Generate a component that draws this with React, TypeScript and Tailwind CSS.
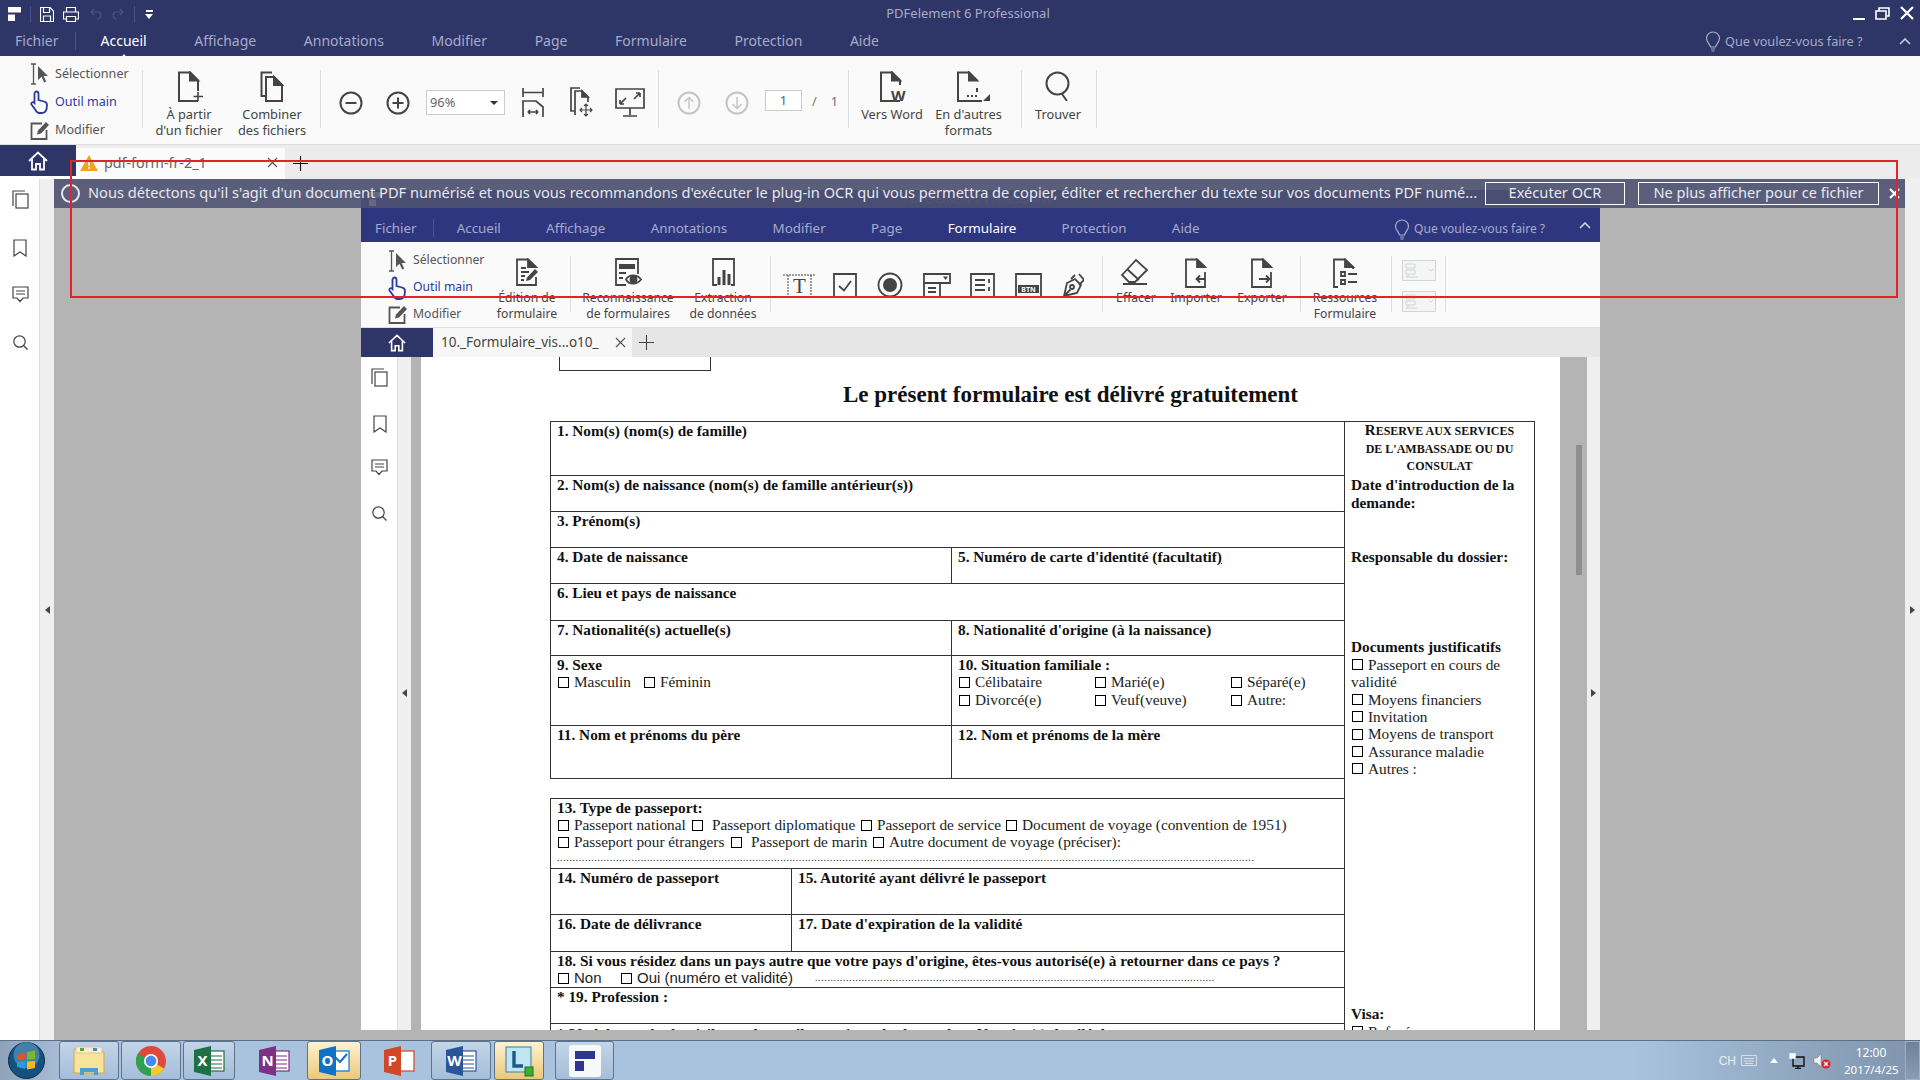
import type { ReactNode } from "react";

function Ic({ w, h, children, className, sw = 1.6 }: { w: number; h: number; children: ReactNode; className?: string; sw?: number }) {
  return (
    <svg width={w} height={h} viewBox={`0 0 ${w} ${h}`} fill="none" stroke="currentColor" strokeWidth={sw} className={className}>
      {children}
    </svg>
  );
}

function Doc({ extra, tail = "M21 17V30H2V1.5H13L21 9.5" }: { extra?: ReactNode; tail?: string }) {
  return (
    <Ic w={30} h={31} sw={2}>
      <path d={tail} />
      <path d="M13 1.5V9.5H21Z" fill="currentColor" />
      {extra}
    </Ic>
  );
}

const SelectIcon = () => (
  <Ic w={19} h={22} sw={1.3}>
    <path d="M1 1H6M3.5 1V21M1 21H6" />
    <path d="M8 3V17L11.5 13.8 14.2 19.5 16.2 18.5 13.6 13H18Z" fill="currentColor" stroke="none" />
  </Ic>
);

const HandIcon = () => (
  <Ic w={18} h={24} sw={1.8}>
    <path d="M6.5 1.5C8 1.5 8.5 2.5 8.5 4V10L14 11.5C16 12 17 13 17 15 17 19 16 23 12 23H9.5C7.5 23 6.5 22 5.5 20L1.5 14.5C.8 13 2.3 11.5 4 12.5L4.5 13V4C4.5 2.7 5.3 1.5 6.5 1.5Z" />
  </Ic>
);

const EditIcon = () => (
  <Ic w={20} h={19} sw={1.8}>
    <path d="M12 2.5H1.5V18H16.5V9" />
    <path d="M7 13.5L8 9.5 16 1 19 4 11 12.5Z" fill="currentColor" stroke="none" />
  </Ic>
);

const ZoomCircle = ({ plus, down, up, color }: { plus?: boolean; down?: boolean; up?: boolean; color: string }) => (
  <Ic w={24} h={24} sw={2} className={color}>
    <circle cx={12} cy={12} r={10.5} />
    {up && <path d="M12 18V6.5M7.5 11L12 6.5 16.5 11" strokeWidth={1.4} />}
    {down && <path d="M12 6V17.5M7.5 13L12 17.5 16.5 13" strokeWidth={1.4} />}
    {!up && !down && <path d="M6.5 12H17.5" />}
    {plus && <path d="M12 6.5V17.5" />}
  </Ic>
);

function Tools({ className, row }: { className: string; row: string }) {
  return (
    <div className={className}>
      <div className={`flex items-center text-[#555] ${row}`}>
        <span className="w-[25px] shrink-0"><SelectIcon /></span>
        <span className="whitespace-nowrap">Sélectionner</span>
      </div>
      <div className={`flex items-center text-[#2c3aa0] ${row}`}>
        <span className="w-[25px] shrink-0"><HandIcon /></span>
        <span className="whitespace-nowrap">Outil main</span>
      </div>
      <div className={`flex items-center text-[#555] ${row}`}>
        <span className="w-[25px] shrink-0"><EditIcon /></span>
        <span className="whitespace-nowrap">Modifier</span>
      </div>
    </div>
  );
}

function Btn({ icon, label, label2, className, iconClass }: { icon: ReactNode; label: string; label2?: string; className: string; iconClass: string }) {
  return (
    <div className={`flex flex-col items-center leading-[16px] text-[#444] ${className}`}>
      <div className={iconClass}>{icon}</div>
      <span className="whitespace-nowrap">{label}</span>
      {label2 && <span className="whitespace-nowrap">{label2}</span>}
    </div>
  );
}

function Logo() {
  return (
    <Ic w={14} h={14}>
      <path d="M0 0H13V5.5H0ZM0 7.5H7V14H0Z" fill="#fff" stroke="none" />
    </Ic>
  );
}

function MenuBar({ items, active, className }: { items: string[]; active: string; className: string }) {
  return (
    <div className={`flex items-center text-[#a7abc9] ${className}`}>
      {items.map((m) => (
        <span key={m} className={m === active ? "relative text-white" : ""}>
          {m}
          {m === active && <span className="absolute left-1/2 top-[24px] -ml-[5px] border-x-[5px] border-b-[6px] border-x-transparent border-b-[#fafafa]" />}
        </span>
      ))}
    </div>
  );
}

const MENU = ["Accueil", "Affichage", "Annotations", "Modifier", "Page", "Formulaire", "Protection", "Aide"];

function Ask({ className }: { className: string }) {
  return (
    <div className={`flex items-center text-[#a7abc9] ${className}`}>
      <Ic w={16} h={21} sw={1.2} className="mr-[4px]">
        <path d="M8 1A6.5 6.5 0 0 0 1.5 7.5C1.5 11 5 13 5.5 16H10.5C11 13 14.5 11 14.5 7.5A6.5 6.5 0 0 0 8 1ZM6 18H10M6.5 20H9.5" />
      </Ic>
      <span className="whitespace-nowrap">Que voulez-vous faire ?</span>
    </div>
  );
}

const Chevron = ({ className }: { className: string }) => (
  <Ic w={12} h={7} className={className}><path d="M1 6L6 1 11 6" /></Ic>
);

const Sep = ({ className }: { className: string }) => <div className={`w-px shrink-0 bg-[#dedede] ${className}`} />;

function Home({ size }: { size: number }) {
  return (
    <svg width={size} height={size} viewBox="0 0 20 20" fill="none" stroke="#fff" strokeWidth={1.8}>
      <path d="M1 10L10 1.5 19 10M4 8V18.5H8V13H12V18.5H16V8" />
    </svg>
  );
}

function SideIcons({ gaps }: { gaps: string[] }) {
  return (
    <div className="flex flex-col items-center text-[#444]">
      <Ic w={17} h={19} sw={1.2}><path d="M1 16V1H13" /><rect x={4} y={4} width={12} height={14} /></Ic>
      <Ic w={14} h={18} sw={1.2} className={gaps[0]}><path d="M1 1H13V17L7 13 1 17Z" /></Ic>
      <Ic w={17} h={17} sw={1.2} className={gaps[1]}><path d="M1 1H16V12H11L8 15.5 5 12H1ZM4 5H13M4 8H13" /></Ic>
      <Ic w={15} h={15} sw={1.2} className={gaps[2]}><circle cx={6.5} cy={6.5} r={5.7} /><path d="M10.5 10.5L14.5 14.5" /></Ic>
    </div>
  );
}

const Arrow = ({ className, left }: { className?: string; left?: boolean }) => (
  <div className={`${left ? "border-r-[5px] border-r-[#444]" : "border-l-[5px] border-l-[#444]"} border-y-[4px] border-y-transparent ${className ?? ""}`} />
);

function OuterRibbon() {
  return (
    <div className="flex h-[89px] items-start bg-[#fafafa] border-b border-[#ddd] text-[12.8px]">
      <Tools className="w-[142px] shrink-0 pl-[30px] pt-[4px] text-[12.6px]" row="h-[28px]" />
      <Sep className="h-[58px] mt-[14px]" />
      <Btn className="ml-[3px] w-[86px] pt-[15px]" iconClass="h-[35px] pl-[6px]" icon={<Doc tail="M21 30H2V1.5H13L21 9.5V20" extra={<path d="M21 21V30M16.5 25.5H26" strokeWidth={1.6} />} />} label="À partir" label2="d'un fichier" />
      <Btn className="w-[80px] pt-[15px]" iconClass="h-[35px]" icon={
        <Ic w={24} h={31} sw={2}>
          <path d="M6 25H1.5V1.5H12" />
          <path d="M6 6H14L22 14V30H6Z" />
          <path d="M14 6V14H22Z" fill="currentColor" />
        </Ic>} label="Combiner" label2="des fichiers" />
      <Sep className="ml-[8px] h-[58px] mt-[14px]" />
      <div className="ml-[18px] mt-[35px] text-[#444]"><ZoomCircle color="" /></div>
      <div className="ml-[23px] mt-[35px] text-[#444]"><ZoomCircle plus color="" /></div>
      <div className="ml-[16px] mt-[34px] flex h-[25px] w-[79px] items-center justify-between border border-[#ccc] bg-white px-[3px] text-[#666]">
        96%
        <span className="mr-[3px] border-x-[4px] border-t-[4px] border-x-transparent border-t-[#333]" />
      </div>
      <div className="ml-[17px] mt-[31px] text-[#444]">
        <Ic w={22} h={30} sw={1.7}><path d="M1 10V1M21 10V1M1 5.5H21M1 30V14H14L21 20V30M6 25H16M6 25L8 23M6 25L8 27M16 25L14 23M16 25L14 27" /></Ic>
      </div>
      <div className="ml-[26px] mt-[31px] text-[#444]">
        <Ic w={23} h={30} sw={1.7}>
          <path d="M5 24H1V1H10M5 24V4H12L18 10V15M5 28V24" />
          <path d="M12 4V10H18Z" fill="currentColor" />
          <path d="M16 17V29M10 23H22M14 19L16 17 18 19M14 27L16 29 18 27M12 21L10 23 12 25M20 21L22 23 20 25" strokeWidth={1.2} />
        </Ic>
      </div>
      <div className="ml-[22px] mt-[32px] text-[#444]">
        <Ic w={30} h={29} sw={1.7}><path d="M1 1H29V20H1ZM15 20V27M8 28H22M5 16L11 10M5 16V12M5 16H9M25 5L19 11M25 5V9M25 5H21" /></Ic>
      </div>
      <Sep className="ml-[13px] h-[58px] mt-[14px]" />
      <div className="ml-[18px] mt-[35px]"><ZoomCircle up color="text-[#c4c4c4]" /></div>
      <div className="ml-[24px] mt-[35px]"><ZoomCircle down color="text-[#c4c4c4]" /></div>
      <div className="ml-[16px] mt-[34px] flex h-[21px] w-[37px] items-center justify-center border border-[#ccc] bg-white text-[#666]">1</div>
      <div className="mt-[36px] flex w-[46px] text-[#777]">
        <span className="ml-[10px]">/</span>
        <span className="ml-[14px]">1</span>
      </div>
      <Sep className="h-[58px] mt-[14px]" />
      <Btn className="ml-[5px] w-[76px] pt-[15px]" iconClass="h-[35px] pl-[4px] relative" icon={
        <Doc tail="M21 30H2V1.5H13L21 9.5V14" extra={<text x={12} y={30} fontSize={15} fontWeight={700} fill="currentColor" stroke="none" fontFamily="Noto Sans">W</text>} />} label="Vers Word" />
      <Btn className="w-[77px] pt-[15px]" iconClass="h-[35px] pl-[8px]" icon={
        <div className="flex items-end">
          <Doc extra={<path d="M11 25H13M15 25H17M19 25H21" strokeWidth={2} />} tail="M21 17V21M26 30H2V1.5H13L21 9.5" />
          <span className="-ml-[3px] mb-[1px] border-b-[7px] border-l-[7px] border-b-[#444] border-l-transparent" />
        </div>} label="En d'autres" label2="formats" />
      <Sep className="ml-[14px] h-[58px] mt-[14px]" />
      <Btn className="ml-[2px] w-[68px] pt-[15px]" iconClass="h-[35px]" icon={
        <Ic w={26} h={30} sw={2}><circle cx={12.5} cy={12.5} r={11} /><path d="M17 23L22 30" /></Ic>} label="Trouver" />
      <Sep className="ml-[4px] h-[58px] mt-[14px]" />
    </div>
  );
}

function FormIcon({ className, children, w }: { className: string; children: ReactNode; w: number }) {
  return <div className={`mt-[30px] text-[#444] ${className}`}><Ic w={w} h={26} sw={1.8}>{children}</Ic></div>;
}

const DisabledIcon = () => (
  <Ic w={34} h={21} sw={1} className="bg-[#f5f5f5] text-[#cfd6d8]">
    <path d="M.5.5H33.5V20.5H.5ZM4 4H13V8H4ZM4 10H13V14H4ZM4 17H16M4 17L7 15M27 9L29 11 31 9" />
  </Ic>
);

function InnerRibbon() {
  return (
    <div className="flex h-[86px] items-start bg-[#fafafa] border-b border-[#ddd] text-[12.2px]">
      <Tools className="w-[123px] shrink-0 pl-[27px] pt-[5px]" row="h-[27px]" />
      <Btn className="w-[86px] pt-[16px]" iconClass="h-[32px]" icon={
        <Ic w={24} h={28} sw={1.8}>
          <path d="M21 19V27H2V1.5H13L21 9" />
          <path d="M13 1.5V9H21Z" fill="currentColor" />
          <path d="M6 10H11M6 14H14M6 18H10M6 22H9" />
          <path d="M11 23L12 19.5 20 11 23 14 15 22Z" fill="currentColor" stroke="none" />
        </Ic>} label="Édition de" label2="formulaire" />
      <Sep className="h-[56px] mt-[14px]" />
      <Btn className="ml-[2px] w-[110px] pt-[16px]" iconClass="h-[32px]" icon={
        <Ic w={28} h={28} sw={1.8}>
          <path d="M12 27H2V1H24V16" />
          <path d="M5 6H21V11H5Z" fill="currentColor" stroke="none" />
          <path d="M5 15H12M5 20H9" />
          <path d="M12 21.5C15 16 23 16 27 21.5 23 27 15 27 12 21.5Z" />
          <circle cx={19.5} cy={21.5} r={3} fill="currentColor" />
        </Ic>} label="Reconnaissance" label2="de formulaires" />
      <Btn className="w-[80px] pt-[16px]" iconClass="h-[32px]" icon={
        <Ic w={25} h={28} sw={1.8}>
          <path d="M6 27H2V1H23V27H20" />
          <path d="M8 27V19M13 27V12M18 27V16" strokeWidth={3} />
        </Ic>} label="Extraction" label2="de données" />
      <Sep className="ml-[7px] h-[56px] mt-[14px]" />
      <FormIcon w={35} className="ml-[11px]">
        <path d="M1 3H34M1 25H34M6 3V25M29 3V25" strokeWidth={1} strokeDasharray="2 1" />
        <text x={17.5} y={21} textAnchor="middle" fontSize={21} fill="currentColor" stroke="none" fontFamily="Liberation Serif">T</text>
      </FormIcon>
      <FormIcon w={24} className="ml-[16px]">
        <path d="M1 2H23V25H1ZM6 14L11 18.5 18 9" />
      </FormIcon>
      <FormIcon w={26} className="ml-[20px]">
        <circle cx={13} cy={13} r={11.5} />
        <circle cx={13} cy={13} r={7} fill="currentColor" stroke="none" />
      </FormIcon>
      <FormIcon w={28} className="ml-[20px]">
        <path d="M1 2H27V11H17V25H1ZM1 11H17M5 16H13M5 20H13" />
        <path d="M20 4.5H25L22.5 8Z" fill="currentColor" stroke="none" />
      </FormIcon>
      <FormIcon w={25} className="ml-[19px]">
        <path d="M1 2H24V25H1ZM5 8H15M5 13H15M5 18H15M19 7V11M19 15V19" />
      </FormIcon>
      <FormIcon w={27} className="ml-[20px]">
        <path d="M1 2H26V25H1Z" />
        <path d="M3 13H24V21H3Z" fill="currentColor" stroke="none" />
        <text x={13.5} y={20} textAnchor="middle" fontSize={7} fontWeight={700} fill="#fafafa" stroke="none" fontFamily="Noto Sans">BTN</text>
      </FormIcon>
      <FormIcon w={22} className="ml-[20px]">
        <path d="M2 24L5 11 13 7 19 13 15 21ZM2 24L8.5 17.5M13 3L9 7M17 2L22 8 17 13" />
        <circle cx={10} cy={15} r={2} />
      </FormIcon>
      <Sep className="ml-[18px] h-[56px] mt-[14px]" />
      <Btn className="ml-[3px] w-[60px] pt-[16px]" iconClass="h-[32px]" icon={
        <Ic w={32} h={28} sw={1.8}>
          <path d="M2 17L16 2 27 12 15 24H9ZM7 11L19 22M3 26H27" />
        </Ic>} label="Effacer" />
      <Btn className="w-[60px] pt-[16px]" iconClass="h-[32px]" icon={
        <Ic w={24} h={30} sw={1.8}>
          <path d="M21 14V29H2V1.5H13L21 9" />
          <path d="M13 1.5V9H21Z" fill="currentColor" />
          <path d="M21 21H13M16 17.5L12.5 21 16 24.5" />
        </Ic>} label="Importer" />
      <Btn className="ml-[4px] w-[64px] pt-[16px]" iconClass="h-[32px]" icon={
        <Ic w={24} h={30} sw={1.8}>
          <path d="M21 14V29H2V1.5H13L21 9" />
          <path d="M13 1.5V9H21Z" fill="currentColor" />
          <path d="M9 21H19M16 17.5L19.5 21 16 24.5" />
        </Ic>} label="Exporter" />
      <Sep className="ml-[6px] h-[56px] mt-[14px]" />
      <Btn className="ml-[1px] w-[86px] pt-[16px]" iconClass="h-[32px]" icon={
        <Ic w={26} h={30} sw={1.8}>
          <path d="M6 29H2V1.5H13L21 9V11" />
          <path d="M13 1.5V9H21Z" fill="currentColor" />
          <path d="M9 14H13V18H9ZM9 22H13V26H9ZM16 16H25M16 24H25" />
        </Ic>} label="Ressources" label2="Formulaire" />
      <Sep className="ml-[3px] h-[56px] mt-[14px]" />
      <div className="ml-[10px] mt-[18px] flex flex-col gap-[10px]">
        <DisabledIcon />
        <DisabledIcon />
      </div>
      <Sep className="ml-[9px] h-[56px] mt-[14px]" />
    </div>
  );
}

const Box = () => <span className="ml-[1px] mr-[5px] inline-block h-[11px] w-[11px] shrink-0 border-[1.5px] border-black" />;

function Opt({ label, className = "" }: { label: string; className?: string }) {
  return (
    <span className={`flex items-center font-normal text-[#222] whitespace-nowrap ${className}`}>
      <Box />
      {label}
    </span>
  );
}

function Row({ className, children }: { className: string; children: ReactNode }) {
  return <div className={`overflow-hidden border-b border-[#333] pl-[6px] whitespace-nowrap ${className}`}>{children}</div>;
}

function Split({ className, left, right, leftClass }: { className: string; left: ReactNode; right: ReactNode; leftClass: string }) {
  return (
    <div className={`flex overflow-hidden border-b border-[#333] ${className}`}>
      <div className={`shrink-0 border-r border-[#333] pl-[6px] ${leftClass}`}>{left}</div>
      <div className="flex-1 pl-[6px] whitespace-nowrap">{right}</div>
    </div>
  );
}

function Form() {
  return (
    <div className="w-[985px] flex border-t border-[#333] text-[15.3px] leading-[18px] font-bold text-[#111]">
      <div className="w-[794px] shrink-0">
        <div className="border-l border-[#333]">
          <Row className="h-[54px]">1. Nom(s) (nom(s) de famille)</Row>
          <Row className="h-[36px]">2. Nom(s) de naissance (nom(s) de famille antérieur(s))</Row>
          <Row className="h-[36px]">3. Prénom(s)</Row>
          <Split className="h-[36px]" leftClass="w-[401px]" left="4. Date de naissance" right={<>5. Numéro de carte d'identité (facultatif<u>)</u></>} />
          <Row className="h-[37px]">6. Lieu et pays de naissance</Row>
          <Split className="h-[35px]" leftClass="w-[401px]" left="7. Nationalité(s) actuelle(s)" right="8. Nationalité d'origine  (à la naissance)" />
          <Split className="h-[70px]" leftClass="w-[401px]" left={
            <>
              9. Sexe
              <div className="-mt-[1px] flex">
                <Opt label="Masculin" className="w-[86px] shrink-0" />
                <Opt label="Féminin" />
              </div>
            </>
          } right={
            <>
              10. Situation familiale :
              <div className="-mt-[1px] grid grid-cols-[136px_136px_1fr]">
                <Opt label="Célibataire" />
                <Opt label="Marié(e)" />
                <Opt label="Séparé(e)" />
                <Opt label="Divorcé(e)" />
                <Opt label="Veuf(veuve)" />
                <Opt label="Autre:" />
              </div>
            </>
          } />
          <Split className="h-[53px]" leftClass="w-[401px]" left="11. Nom et prénoms du père" right="12. Nom et prénoms de la mère" />
        </div>
        <div className="h-[19px]" />
        <div className="border-l border-t border-[#333]">
          <Row className="h-[70px]">
            13. Type de passeport:
            <div className="-mt-[1px] flex">
              <Opt label="Passeport national" className="w-[134px] shrink-0" />
              <Opt label="Passeport diplomatique" className="w-[169px] shrink-0 [&>span]:mr-[9px]" />
              <Opt label="Passeport de service" className="w-[145px] shrink-0" />
              <Opt label="Document de voyage (convention de 1951)" />
            </div>
            <div className="-mt-[1px] flex">
              <Opt label="Passeport pour étrangers" className="w-[173px] shrink-0" />
              <Opt label="Passeport de marin" className="w-[142px] shrink-0 [&>span]:mr-[9px]" />
              <Opt label="Autre document de voyage (préciser):" />
            </div>
            <div className="mt-[2px] h-[12px] w-[697px] overflow-hidden text-[10px] leading-[10px] font-normal tracking-[0.6px]">{".".repeat(260)}</div>
          </Row>
          <Split className="h-[46px]" leftClass="w-[241px]" left="14. Numéro de passeport" right="15. Autorité ayant délivré le passeport" />
          <Split className="h-[37px]" leftClass="w-[241px]" left="16. Date de délivrance" right="17. Date d'expiration de la validité" />
          <Row className="h-[36px]">
            18. Si vous résidez dans un pays autre que votre pays d'origine, êtes-vous autorisé(e) à retourner dans ce pays ?
            <div className="-mt-[1px] flex font-['Liberation_Sans',sans-serif] text-[15px]">
              <Opt label="Non" className="w-[63px] shrink-0" />
              <Opt label="Oui (numéro et validité)" className="w-[195px] shrink-0" />
              <span className="font-['Liberation_Serif',serif] w-[400px] overflow-hidden text-[10px] font-normal tracking-[0.6px]">{".".repeat(150)}</span>
            </div>
          </Row>
          <Row className="h-[36px]">* 19. Profession :</Row>
          <div className="h-[30px] pl-[6px] pt-[1px] whitespace-nowrap overflow-hidden">* 20. Adresse du domicile et adresse électronique du demandeur       Numéro(s) de téléphone</div>
        </div>
      </div>
      <div className="w-[191px] h-[640px] border-x border-[#333] pl-[6px]">
        <div className="-ml-[6px] text-center text-[12px] uppercase leading-[17.6px]">
          <div className="first-letter:text-[15px]">Reserve aux services</div>
          <div>de l'ambassade ou du</div>
          <div>consulat</div>
        </div>
        <div>Date d'introduction de la</div>
        <div>demande:</div>
        <div className="mt-[36px]">Responsable du dossier:</div>
        <div className="mt-[72px]">Documents justificatifs</div>
        <div className="font-normal text-[#222] leading-[17.4px]">
          <Opt label="Passeport en cours de" />
          <div>validité</div>
          <Opt label="Moyens financiers" />
          <Opt label="Invitation" />
          <Opt label="Moyens de transport" />
          <Opt label="Assurance maladie" />
          <Opt label="Autres :" />
        </div>
        <div className="mt-[227px]">Visa:</div>
        <Opt label="Refusé" />
      </div>
    </div>
  );
}

function InnerWindow() {
  return (
    <div className="ml-[307px] flex h-[840px] w-[1239px] flex-col">
      <div className="flex h-[18px] items-center bg-[#2f3678] pl-[8px] text-[12px] text-[#6d7199]">
        <Logo />
        <span className="ml-[520px]">PDFelement 6 Professional</span>
      </div>
      <div className="relative flex h-[34px] items-center bg-[#2f3680] pt-[6px] text-[13.4px]">
        <span className="ml-[14px] text-[#a7abc9]">Fichier</span>
        <div className="ml-[16px] h-[18px] w-px bg-[#4a5090]" />
        <MenuBar items={MENU} active="Formulaire" className="ml-[23px] gap-[45.3px]" />
        <Ask className="absolute left-[1033px] top-[11px] text-[12.1px]" />
        <Chevron className="absolute left-[1218px] top-[14px] text-[#d5d7e5]" />
      </div>
      <InnerRibbon />
      <div className="flex h-[29px] bg-[#e6e6e6]">
        <div className="flex w-[72px] items-center justify-center bg-[#2e3567]"><Home size={18} /></div>
        <div className="flex w-[199px] items-center bg-[#f7f7f7] pl-[8px] text-[13.5px] text-[#444]">
          <span className="w-[174px] whitespace-nowrap">10._Formulaire_vis...o10_</span>
          <Ic w={11} h={11} sw={1.1} className="text-[#555]"><path d="M1 1L10 10M10 1L1 10" /></Ic>
        </div>
        <Ic w={15} h={15} sw={1.1} className="ml-[7px] mt-[7px] text-[#444]"><path d="M7.5 0V15M0 7.5H15" /></Ic>
      </div>
      <div className="flex flex-1 overflow-hidden">
        <div className="w-[37px] bg-white pt-[11px] pl-[1px] border-r border-[#ddd]">
          <SideIcons gaps={["mt-[28px]", "mt-[26px]", "mt-[30px]"]} />
        </div>
        <div className="flex w-[13px] items-center justify-center bg-[#efefef]"><Arrow left className="mb-[2px]" /></div>
        <div className="w-[10px] bg-[#b4b4b4]" />
        <div className="w-[1139px] overflow-hidden bg-white pl-[129px] font-['Liberation_Serif',serif]">
          <div className="ml-[9px] h-[14px] w-[152px] border-x border-b border-[#333]" />
          <div className="flex h-[50px] items-center pb-[2px] pl-[293px] text-[23px] font-bold text-[#111] whitespace-nowrap">
            Le présent formulaire est délivré gratuitement
          </div>
          <Form />
        </div>
        <div className="relative w-[27px] bg-[#b4b4b4]">
          <div className="absolute left-[16px] top-[88px] h-[130px] w-[6px] bg-[#8e8e8e]" />
        </div>
        <div className="flex w-[13px] items-center justify-center bg-[#efefef]"><Arrow className="mb-[2px]" /></div>
      </div>
    </div>
  );
}

function TaskBtn({ className = "", hot, children }: { className: string; hot?: boolean; children: ReactNode }) {
  return (
    <div className={`flex h-[39px] shrink-0 items-center justify-center rounded-[3px] border border-[#5f728b] ${hot ? "bg-gradient-to-b from-[#fdf3cf] to-[#ebc878]" : "bg-gradient-to-b from-[#c3d5e8] to-[#a4bdd8]"} ${className}`}>
      {children}
    </div>
  );
}

const OfficeIcon = ({ bg, letter, lines, sq }: { bg: string; letter: string; lines?: boolean; sq?: boolean }) => (
  <svg width={32} height={32} viewBox="0 0 32 32">
    <rect x={14} y={6} width={17} height={20} fill="#fff" stroke={bg} strokeWidth={1.2} />
    {lines && <path d="M17 11H29M17 15H29M17 19H29M17 23H29" stroke={bg} strokeWidth={1.2} />}
    {sq && <path d="M17 12L22 17 29 9" stroke={bg} fill="none" strokeWidth={2} />}
    <path d="M1 5L18 1V31L1 27Z" fill={bg} />
    <text x={9.5} y={21} textAnchor="middle" fontSize={15} fontWeight={700} fill="#fff" fontFamily="Noto Sans">{letter}</text>
  </svg>
);

function Taskbar() {
  return (
    <div className="relative flex h-[40px] items-end border-t border-[#5d708a] bg-gradient-to-r from-[#a9c3de] via-[#a9c3de] via-85% to-[#7f93ac]">
      <div className="flex h-[39px] w-[59px] shrink-0 items-center justify-start pl-[8px] bg-gradient-to-r from-[#8ea3ba] to-[#a5bcd4]">
        <svg width={37} height={37} viewBox="0 0 37 37">
          <circle cx={18.5} cy={18.5} r={18} fill="#16507c" stroke="#0f2c4a" />
          <circle cx={18.5} cy={13} r={13} fill="#6fb0d8" opacity={0.5} />
          <path d="M9 13L17 10.5V17.5L9 18Z" fill="#e5502a" />
          <path d="M19 10L27 8.5V17L19 17.5Z" fill="#7cb82f" />
          <path d="M9 20L17 19.5V27L9 25Z" fill="#2b9be0" />
          <path d="M19 19.5L27 19V26L19 27.5Z" fill="#f5b81f" />
        </svg>
      </div>
      <TaskBtn className="w-[60px]">
        <svg width={34} height={32} viewBox="0 0 34 32">
          <path d="M2 4H14L16 7H32V28H2Z" fill="#f7e39a" stroke="#c9a94f" />
          <path d="M4 2H30V8H4Z" fill="#f9eecb" stroke="#c9b88a" strokeWidth={0.6} />
          <path d="M8 3H12V6H8Z" fill="#56a83b" /><path d="M21 3H25V6H21Z" fill="#3a8ccf" />
          <path d="M8 23H26V30H22V27H12V30H8Z" fill="#4aa0d6" />
        </svg>
      </TaskBtn>
      <TaskBtn className="ml-[2px] w-[60px]">
        <svg width={30} height={30} viewBox="0 0 30 30">
          <circle cx={15} cy={15} r={15} fill="#dd4a3d" />
          <path d="M15 15L28 22.5A15 15 0 0 1 9 28.8Z" fill="#f8c82c" />
          <path d="M15 15L15 30A15 15 0 0 1 2 7.5Z" fill="#2fa150" />
          <circle cx={15} cy={15} r={7} fill="#fff" />
          <circle cx={15} cy={15} r={5.4} fill="#4a8af0" />
        </svg>
      </TaskBtn>
      <TaskBtn className="ml-[2px] w-[52px]"><OfficeIcon bg="#1e7145" letter="X" lines /></TaskBtn>
      <div className="ml-[9px] flex h-[39px] w-[60px] items-center justify-center"><OfficeIcon bg="#7c3185" letter="N" lines /></div>
      <TaskBtn hot className="ml-[3px] w-[54px]"><OfficeIcon bg="#0f72c5" letter="O" sq /></TaskBtn>
      <div className="ml-[5px] flex h-[39px] w-[65px] items-center justify-center"><OfficeIcon bg="#d24726" letter="P" /></div>
      <TaskBtn className="w-[60px]"><OfficeIcon bg="#2a5699" letter="W" lines /></TaskBtn>
      <TaskBtn hot className="ml-[3px] w-[50px]">
        <svg width={32} height={32} viewBox="0 0 32 32">
          <rect x={3} y={2} width={25} height={25} fill="#bfe4f2" stroke="#3f7f9e" />
          <path d="M11 6V21H20" stroke="#1b5a80" strokeWidth={3.4} fill="none" />
          <rect x={22} y={22} width={8} height={9} fill="#3bb02c" stroke="#1e6e16" />
        </svg>
      </TaskBtn>
      <TaskBtn className="ml-[11px] w-[59px]">
        <div className="flex h-[32px] w-[32px] items-center justify-center rounded-[3px] bg-[#f7f8fa]">
          <svg width={22} height={22} viewBox="0 0 22 22"><path d="M1 1H21V9H1ZM1 11H10V21H1Z" fill="#2e358f" /></svg>
        </div>
      </TaskBtn>
      <div className="absolute right-0 top-0 flex h-[39px] items-center text-white">
        <span className="mr-[5px] text-[12px] font-['Liberation_Sans',sans-serif] text-[#e7edf4]">CH</span>
        <Ic w={16} h={11} sw={1} className="mr-[13px] text-[#d8dee6]"><path d="M.5.5H15.5V10.5H.5ZM3 3.5H13M3 6H13M4 8.5H12" /></Ic>
        <span className="mr-[11px] border-x-[4px] border-b-[5px] border-x-transparent border-b-white" />
        <Ic w={16} h={16} sw={1.4} className="mr-[8px] text-white"><path d="M4 4H15V13H4ZM9 13V15.5M6 15.5H12" stroke="#111" /><path d="M1 1H6V5H1Z" fill="#fff" /></Ic>
        <svg width={18} height={16} viewBox="0 0 18 16" className="mr-[13px]">
          <path d="M1 5H4L8 1V14L4 10H1Z" fill="#eef1f5" stroke="#777" strokeWidth={0.5} />
          <circle cx={13} cy={11} r={4.5} fill="#d8262c" />
          <path d="M11 9L15 13M15 9L11 13" stroke="#fff" strokeWidth={1.3} />
        </svg>
        <div className="mr-[7px] w-[54px] text-center font-['Noto_Sans',sans-serif] text-[12px] leading-[17px]">
          <div>12:00</div>
          <div className="whitespace-nowrap text-[11.5px]">2017/4/25</div>
        </div>
        <div className="h-[39px] w-[15px] border border-[#9fb0c4] bg-gradient-to-b from-[#6e8197] to-[#8a9cb2]" />
      </div>
    </div>
  );
}

export default function App() {
  return (
    <div className="relative flex h-[1080px] w-[1920px] flex-col overflow-hidden bg-[#b4b4b4] font-['Noto_Sans','Open_Sans',sans-serif]">
      {/* title + menu */}
      <div className="relative h-[56px] shrink-0 bg-[#2e3567]">
        <div className="flex h-[28px] items-center text-white">
          <div className="ml-[8px]"><Logo /></div>
          <div className="ml-[8px] h-[16px] w-px bg-[#4a5088]" />
          <Ic w={14} h={15} sw={1.2} className="ml-[9px]"><path d="M.5.5H10L13.5 4V14.5H.5ZM3.5.5V5.5H9.5V.5M3.5 14.5V9H10.5V14.5" /></Ic>
          <Ic w={16} h={15} sw={1.2} className="ml-[9px]"><path d="M3.5 5V.5H12.5V5M3.5 12H.5V5H15.5V12H12.5M3.5 9.5H12.5V14.5H3.5Z" /></Ic>
          <Ic w={12} h={12} sw={1.2} className="ml-[11px] text-[#4d5384]"><path d="M4 1L1 4 4 7M1 4H8C12 4 12 11 7 11" /></Ic>
          <Ic w={12} h={12} sw={1.2} className="ml-[10px] text-[#4d5384]"><path d="M8 1L11 4 8 7M11 4H4C0 4 0 11 5 11" /></Ic>
          <div className="ml-[10px] h-[16px] w-px bg-[#4a5088]" />
          <div className="ml-[10px] flex flex-col items-center gap-[2px]">
            <div className="h-[2px] w-[7px] bg-white" />
            <div className="border-x-[4px] border-t-[5px] border-x-transparent border-t-white" />
          </div>
        </div>
        <div className="absolute inset-x-0 top-[4px] text-center text-[13px] pl-[16px] text-[#a7abc9]">PDFelement 6 Professional</div>
        <div className="absolute right-[6px] top-[6px] flex items-end gap-[10px] text-white">
          <div className="h-[2px] w-[12px] bg-white" />
          <Ic w={15} h={13} sw={1.6}><path d="M1 4H11V12H1ZM4 4V1H14V9H11" /></Ic>
          <Ic w={14} h={14} sw={2.2}><path d="M1 1L13 13M13 1L1 13" /></Ic>
        </div>
        <div className="flex h-[25px] items-center text-[14px]">
          <span className="ml-[15px] text-[#a7abc9]">Fichier</span>
          <div className="ml-[16px] h-[18px] w-px bg-[#4a5088]" />
          <MenuBar items={MENU} active="Accueil" className="ml-[25px] gap-[47.6px]" />
        </div>
        <Ask className="absolute left-[1705px] top-[31px] text-[12.7px]" />
        <Chevron className="absolute left-[1899px] top-[38px] text-[#c9ccdc]" />
      </div>
      <OuterRibbon />
      {/* tabs */}
      <div className="flex h-[34px] shrink-0 bg-[#ececec]">
        <div className="h-full w-[76px] bg-white">
          <div className="flex h-[31px] items-center justify-center bg-[#2e3567]"><Home size={20} /></div>
        </div>
        <div className="mt-[3px] flex w-[209px] items-start bg-[#fbfbfb] pl-[4px] pt-[5px] text-[14.3px] text-[#666]">
          <svg width={18} height={16} viewBox="0 0 18 16" className="mt-[2px]">
            <path d="M9 0L18 16H0Z" fill="#f0a422" />
            <path d="M8.2 5H9.8V11H8.2ZM8.2 12H9.8V14H8.2Z" fill="#fff" />
          </svg>
          <span className="ml-[6px] w-[163px] leading-[20px]">pdf-form-fr-2_1</span>
          <Ic w={11} h={11} sw={1.2} className="mt-[4px] text-[#555]"><path d="M1 1L10 10M10 1L1 10" /></Ic>
        </div>
        <Ic w={15} h={15} sw={1.1} className="ml-[8px] mt-[11px] text-[#111]"><path d="M7.5 0V15M0 7.5H15" /></Ic>
      </div>
      {/* body */}
      <div className="flex h-[861px] shrink-0">
        <div className="h-full w-[40px] border-r border-[#ddd] bg-white pl-[1px] pt-[11px]">
          <SideIcons gaps={["mt-[30px]", "mt-[29px]", "mt-[32px]"]} />
        </div>
        <div className="flex h-full w-[14px] items-center justify-center bg-[#efefef]"><Arrow left /></div>
        <div className="h-full flex-1 pt-[11px]">
          <InnerWindow />
        </div>
        <div className="flex h-full w-[15px] items-center justify-center bg-[#efefef]"><Arrow /></div>
      </div>
      <Taskbar />

      {/* OCR notice over the page */}
      <div className="absolute left-[54px] top-[179px] flex h-[29px] w-[1851px] items-center bg-[rgba(78,82,115,0.87)] text-[14.6px] text-[#e8e8ee]">
        <div className="ml-[7px] h-[19px] w-[19px] rounded-full border-2 border-[#e8e8ee]" />
        <span className="mb-[2px] ml-[8px] w-[1397px] whitespace-nowrap">Nous détectons qu'il s'agit d'un document PDF numérisé et nous vous recommandons d'exécuter le plug-in OCR qui vous permettra de copier, éditer et rechercher du texte sur vos documents PDF numé...</span>
        <div className="flex h-[23px] w-[140px] items-center justify-center border border-white pb-[2px]">Exécuter OCR</div>
        <div className="ml-[13px] flex h-[23px] w-[241px] items-center justify-center border border-white pb-[2px] whitespace-nowrap">Ne plus afficher pour ce fichier</div>
        <Ic w={11} h={11} sw={2.2} className="ml-[10px] text-white"><path d="M1 1L10 10M10 1L1 10" /></Ic>
      </div>
      {/* red annotation */}
      <div className="pointer-events-none absolute left-[70px] top-[160px] h-[138px] w-[1828px] border-2 border-[#e2232e]" />
    </div>
  );
}
